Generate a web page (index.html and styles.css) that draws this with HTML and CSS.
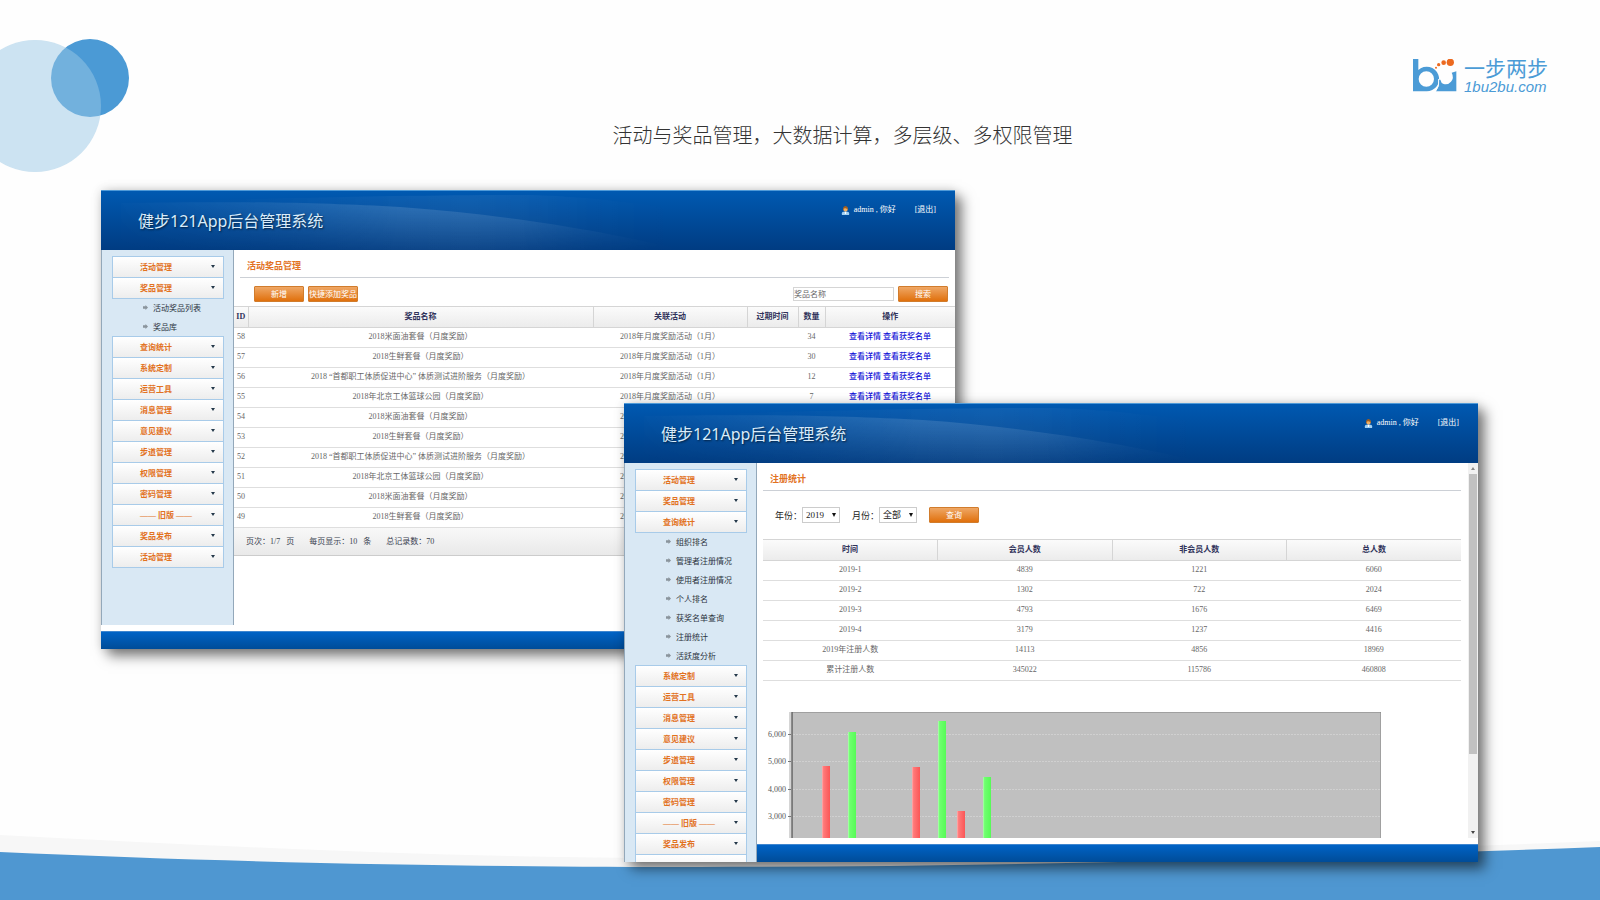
FILE: index.html
```html
<!DOCTYPE html>
<html lang="zh-CN">
<head>
<meta charset="utf-8">
<title>健步121App后台管理系统</title>
<link rel="stylesheet" href="styles.css">
</head>
<body>
<svg class="defs" width="0" height="0" aria-hidden="true">
  <defs>
    <linearGradient id="beam" x1="0" y1="0" x2="0" y2="1">
      <stop offset="0" stop-color="#fff" stop-opacity=".14"/>
      <stop offset="1" stop-color="#fff" stop-opacity="0"/>
    </linearGradient>
    <linearGradient id="haze" x1="0" y1="0" x2="1" y2="0">
      <stop offset="0" stop-color="#fff" stop-opacity="0"/>
      <stop offset=".6" stop-color="#fff" stop-opacity=".06"/>
      <stop offset="1" stop-color="#fff" stop-opacity="0"/>
    </linearGradient>
    <linearGradient id="fade" x1="0" y1="0" x2="1" y2="0">
      <stop offset="0" stop-color="#000"/>
      <stop offset=".5" stop-color="#fff"/>
      <stop offset=".7" stop-color="#fff"/>
      <stop offset="1" stop-color="#000"/>
    </linearGradient>
    <mask id="edges" maskUnits="userSpaceOnUse" x="0" y="0" width="600" height="59">
      <rect width="600" height="59" fill="url(#fade)"/>
    </mask>
    <linearGradient id="red" x1="0" y1="0" x2="1" y2="0">
      <stop offset="0" stop-color="#ffb0b0"/><stop offset=".2" stop-color="#ff7a7a"/><stop offset="1" stop-color="#fb5656"/>
    </linearGradient>
    <linearGradient id="green" x1="0" y1="0" x2="1" y2="0">
      <stop offset="0" stop-color="#b4ffb4"/><stop offset=".2" stop-color="#70ff70"/><stop offset="1" stop-color="#56fb56"/>
    </linearGradient>
    <symbol id="swoosh" viewBox="0 0 600 59">
      <g mask="url(#edges)">
        <path d="M20 12C200 6 330 4 432 4C500 6 560 16 600 22V59H20Z" fill="url(#haze)"/>
        <path d="M20 12C159 10 220 12 299 16C400 23 506 40 580 59H20Z" fill="url(#beam)"/>
      </g>
    </symbol>
    <symbol id="user" viewBox="0 0 10 10">
      <path d="M1 10V8Q1 6.500 3 6.500H7Q9 6.500 9 8V10Z" fill="#9fd0f5"/>
      <path d="M4 6H6L5.500 9H4.500Z" fill="#fff"/>
      <circle cx="5" cy="3.500" r="2.500" fill="#f0b066"/>
      <path d="M2.300 5V3Q2.500 0 5 0T7.700 3V5L6.700 3Q5 3 4.500 2.200Q3.500 3 3.300 3.200Z" fill="#a35f1e"/>
    </symbol>
  </defs>
</svg>

<main class="slide">
  <svg class="bubbles" width="130" height="180" viewBox="0 0 130 180" aria-hidden="true">
    <circle cx="90" cy="78" r="39" fill="#4b9ad5"/>
    <circle cx="35" cy="106" r="66" fill="#99c7e5" fill-opacity=".5"/>
  </svg>
  <svg class="wave" viewBox="0 0 1600 70" preserveAspectRatio="none" aria-hidden="true">
    <path d="M0 5C250 18 450 27 650 28C1000 28 1300 24 1600 11V70H0Z" fill="#f7f7f7"/>
    <path d="M0 22C267 34 500 37 700 37C1000 37 1300 28 1600 17V70H0Z" fill="#4f97d1"/>
  </svg>

  <header class="top">
    <div class="brand">
      <svg width="44" height="33" viewBox="0 0 132 99" aria-hidden="true">
        <path d="M0 0H16V33A37 37 0 1 1 40 97H0ZM40 37A23 23 0 1 0 40 83A23 23 0 1 0 40 37Z" fill="#4b9bd6" fill-rule="evenodd"/>
        <path d="M76 62Q79 82 68 97H130V37L116 41Q124 56 114 68Q104 79 92 75Q84 72 82 62Z" fill="#4b9bd6"/>
        <path d="M77 60Q81 82 67 98" fill="none" stroke="#fff" stroke-width="3"/>
        <g fill="#ec6a20"><circle cx="112" cy="10" r="11"/><circle cx="92" cy="11" r="7"/><circle cx="77" cy="17" r="5"/><circle cx="69" cy="26" r="3"/></g>
      </svg>
      <div class="brand-text"><span class="brand-cn">一步两步</span><span class="brand-url">1bu2bu.com</span></div>
    </div>
    <h1 class="headline">活动与奖品管理，大数据计算，多层级、多权限管理</h1>
  </header>

  <div class="desk">
    <section class="win win-back">
      <header class="win-head">
        <svg class="swoosh" width="600" height="59" aria-hidden="true"><use href="#swoosh"/></svg>
        <h2 class="win-title">健步121App后台管理系统</h2>
        <div class="account"><svg width="9" height="9" aria-hidden="true"><use href="#user"/></svg><span>admin , 你好</span><a class="logout" href="#">[退出]</a></div>
      </header>
      <div class="win-body">
        <nav class="side">
          <button class="item">活动管理</button>
          <button class="item">奖品管理</button>
          <div class="sub"><a href="#">活动奖品列表</a><a href="#">奖品库</a></div>
          <button class="item">查询统计</button>
          <button class="item">系统定制</button>
          <button class="item">运营工具</button>
          <button class="item">消息管理</button>
          <button class="item">意见建议</button>
          <button class="item">步道管理</button>
          <button class="item">权限管理</button>
          <button class="item">密码管理</button>
          <button class="item">—— 旧版 ——</button>
          <button class="item">奖品发布</button>
          <button class="item">活动管理</button>
        </nav>
        <div class="pane">
          <h3 class="pane-title">活动奖品管理</h3>
          <form class="tools">
            <button class="btn" type="button">新增</button>
            <button class="btn" type="button">快捷添加奖品</button>
            <input class="search" type="text" placeholder="奖品名称" aria-label="奖品名称">
            <button class="btn" type="button">搜索</button>
          </form>
          <table class="grid prizes">
            <colgroup><col class="c-id"><col><col class="c-act"><col class="c-exp"><col class="c-num"><col class="c-op"></colgroup>
            <thead><tr><th>ID</th><th>奖品名称</th><th>关联活动</th><th>过期时间</th><th>数量</th><th>操作</th></tr></thead>
            <tbody>
              <tr><td>58</td><td>2018米面油套餐（月度奖励）</td><td>2018年月度奖励活动（1月）</td><td></td><td>34</td><td><a href="#">查看详情</a> <a href="#">查看获奖名单</a></td></tr>
              <tr><td>57</td><td>2018生鲜套餐（月度奖励）</td><td>2018年月度奖励活动（1月）</td><td></td><td>30</td><td><a href="#">查看详情</a> <a href="#">查看获奖名单</a></td></tr>
              <tr><td>56</td><td>2018 “首都职工体质促进中心” 体质测试进阶服务（月度奖励）</td><td>2018年月度奖励活动（1月）</td><td></td><td>12</td><td><a href="#">查看详情</a> <a href="#">查看获奖名单</a></td></tr>
              <tr><td>55</td><td>2018年北京工体篮球公园（月度奖励）</td><td>2018年月度奖励活动（1月）</td><td></td><td>7</td><td><a href="#">查看详情</a> <a href="#">查看获奖名单</a></td></tr>
              <tr><td>54</td><td>2018米面油套餐（月度奖励）</td><td>2018年月度奖励活动（1月）</td><td></td><td></td><td></td></tr>
              <tr><td>53</td><td>2018生鲜套餐（月度奖励）</td><td>2018年月度奖励活动（1月）</td><td></td><td></td><td></td></tr>
              <tr><td>52</td><td>2018 “首都职工体质促进中心” 体质测试进阶服务（月度奖励）</td><td>2018年月度奖励活动（1月）</td><td></td><td></td><td></td></tr>
              <tr><td>51</td><td>2018年北京工体篮球公园（月度奖励）</td><td>2018年月度奖励活动（1月）</td><td></td><td></td><td></td></tr>
              <tr><td>50</td><td>2018米面油套餐（月度奖励）</td><td>2018年月度奖励活动（1月）</td><td></td><td></td><td></td></tr>
              <tr><td>49</td><td>2018生鲜套餐（月度奖励）</td><td>2018年月度奖励活动（1月）</td><td></td><td></td><td></td></tr>
            </tbody>
          </table>
          <div class="pager"><span>页次：1/7 &nbsp; 页</span><span>每页显示：10 &nbsp; 条</span><span>总记录数：70</span></div>
        </div>
      </div>
      <footer class="win-foot"></footer>
    </section>

    <section class="win win-front">
      <header class="win-head">
        <svg class="swoosh" width="600" height="59" aria-hidden="true"><use href="#swoosh"/></svg>
        <h2 class="win-title">健步121App后台管理系统</h2>
        <div class="account"><svg width="9" height="9" aria-hidden="true"><use href="#user"/></svg><span>admin , 你好</span><a class="logout" href="#">[退出]</a></div>
      </header>
      <div class="win-body">
        <nav class="side">
          <button class="item">活动管理</button>
          <button class="item">奖品管理</button>
          <button class="item">查询统计</button>
          <div class="sub"><a href="#">组织排名</a><a href="#">管理者注册情况</a><a href="#">使用者注册情况</a><a href="#">个人排名</a><a href="#">获奖名单查询</a><a href="#">注册统计</a><a href="#">活跃度分析</a></div>
          <button class="item">系统定制</button>
          <button class="item">运营工具</button>
          <button class="item">消息管理</button>
          <button class="item">意见建议</button>
          <button class="item">步道管理</button>
          <button class="item">权限管理</button>
          <button class="item">密码管理</button>
          <button class="item">—— 旧版 ——</button>
          <button class="item">奖品发布</button>
          <button class="item" aria-label="活动管理"></button>
        </nav>
        <div class="column">
          <div class="scroll">
            <div class="pane">
              <h3 class="pane-title">注册统计</h3>
              <form class="filters">
                <label for="year">年份：</label>
                <span class="pick"><select id="year"><option>2019</option></select></span>
                <label for="month">月份：</label>
                <span class="pick"><select id="month"><option>全部</option></select></span>
                <button class="btn" type="button">查询</button>
              </form>
              <table class="grid stats">
                <thead><tr><th>时间</th><th>会员人数</th><th>非会员人数</th><th>总人数</th></tr></thead>
                <tbody>
                  <tr><td>2019-1</td><td>4839</td><td>1221</td><td>6060</td></tr>
                  <tr><td>2019-2</td><td>1302</td><td>722</td><td>2024</td></tr>
                  <tr><td>2019-3</td><td>4793</td><td>1676</td><td>6469</td></tr>
                  <tr><td>2019-4</td><td>3179</td><td>1237</td><td>4416</td></tr>
                  <tr><td>2019年注册人数</td><td>14113</td><td>4856</td><td>18969</td></tr>
                  <tr><td>累计注册人数</td><td>345022</td><td>115786</td><td>460808</td></tr>
                </tbody>
              </table>
              <svg class="chart" width="618" height="126" viewBox="0 0 618 126" role="img" aria-label="注册统计图">
                <rect x="29" y="0" width="589" height="140" fill="#c0c0c0" stroke="#808080"/>
                <path d="M27 0V126" stroke="#aaa"/>
                <path d="M29 0V126" stroke="#555"/>
                <path d="M30 22H617M30 49H617M30 77H617M30 104H617" transform="translate(0 .5)" stroke="#d0d0d0" stroke-dasharray="2 1"/>
                <path d="M25 22H28M25 49H28M25 77H28M25 104H28" transform="translate(0 .5)" stroke="#777"/>
                <g class="ticks" text-anchor="end"><text x="23" y="25">6,000</text><text x="23" y="52">5,000</text><text x="23" y="80">4,000</text><text x="23" y="107">3,000</text></g>
                <g fill="url(#red)"><rect x="59" y="54" width="8" height="72"/><rect x="149" y="55" width="8" height="71"/><rect x="194" y="99" width="8" height="27"/></g>
                <g fill="url(#green)"><rect x="85" y="20" width="8" height="106"/><rect x="175" y="9" width="8" height="117"/><rect x="220" y="65" width="8" height="61"/></g>
              </svg>
            </div>
            <div class="bar" aria-hidden="true"><i class="up"></i><i class="thumb"></i><i class="down"></i></div>
          </div>
          <footer class="win-foot"></footer>
        </div>
      </div>
    </section>
  </div>
</main>
</body>
</html>
```

FILE: styles.css
```css
* { box-sizing: border-box; }

body {
  margin: 0;
  background: #fefefe;
  color: #333;
  font-family: "Liberation Serif", "Noto Sans CJK SC", serif;
  font-size: 8px;
}

h1, h2, h3 { margin: 0; font-weight: 400; }
button, input, select { font: inherit; color: inherit; }
a { text-decoration: none; }

.defs { position: absolute; }

.slide {
  position: relative;
  min-height: 100vh;
  overflow: hidden;
}

.bubbles { position: absolute; left: 0; top: 0; }
.wave { position: absolute; left: 0; bottom: 0; width: 100%; height: 70px; }

/* Top of the slide */
.top { position: relative; padding-top: 55px; }

.brand {
  display: flex;
  justify-content: flex-end;
  gap: 7px;
  height: 38px;
  padding-right: 50px;
  color: #4b9bd6;
}
.brand svg { margin-top: 4px; }
.brand-text { display: flex; flex-direction: column; width: 86px; }
.brand-cn { font: 400 21px/25px "Noto Sans CJK SC", sans-serif; }
.brand-url { font: italic 15px/13px "Liberation Sans", sans-serif; }

.headline {
  margin-top: 27px;
  padding-left: 85px;
  text-align: center;
  font: 300 20px/30px "Noto Sans CJK SC", sans-serif;
}

/* The two overlapping windows */
.desk {
  position: relative;
  display: grid;
  grid-template-columns: 101fr 523fr 331fr 523fr 122fr;
  align-items: start;
  margin-top: 40px;
  padding-bottom: 38px;
}

.win {
  grid-row: 1;
  min-width: 0;
  background: #fff;
  box-shadow: 7px 7px 12px rgba(0, 0, 0, .5), 0 0 10px rgba(0, 0, 0, .15);
}
.win-back { grid-column: 2 / 4; }
.win-front { grid-column: 3 / 5; margin-top: 213px; }

.win-head {
  position: relative;
  display: flex;
  justify-content: space-between;
  align-items: flex-start;
  height: 60px;
  padding: 14px 19px 0 37px;
  border-top: 1px solid #4f9ad8;
  background: linear-gradient(#0059b1, #003c82);
  color: #fff;
}
.swoosh { position: absolute; left: 0; top: 0; }

.win-title {
  position: relative;
  padding-top: 4px;
  color: #d9ecfb;
  font: 400 16px/24px "Noto Sans", "Noto Sans CJK SC", sans-serif;
  text-shadow: 1px 1px 2px rgba(0, 0, 0, .6);
}

.account {
  position: relative;
  display: flex;
  align-items: center;
  gap: 4px;
  line-height: 10px;
}
.logout { margin-left: 15px; color: #fff; }

.win-body {
  display: grid;
  grid-template-columns: 133px minmax(0, 1fr);
  min-height: 375px;
}

/* Sidebar */
.side {
  contain: size;
  overflow: hidden;
  display: flex;
  flex-direction: column;
  padding: 6px 9px 0 10px;
  border: solid #93a8ba;
  border-width: 0 1px;
  background: #d9e8f4;
}

.item {
  flex: none;
  display: flex;
  justify-content: space-between;
  align-items: center;
  height: 22px;
  margin: 0 0 -1px;
  padding: 0 8px 1px 27px;
  border: 1px solid #a8cbe9;
  border-radius: 0;
  background: linear-gradient(#fff, #ededed);
  color: #e2721f;
  font-weight: 700;
}
.item::after {
  content: "";
  border: solid transparent;
  border-width: 3px 2px 0;
  border-top-color: #24384a;
}

.sub { flex: none; display: flex; flex-direction: column; padding-left: 31px; }
.sub a {
  display: flex;
  align-items: center;
  gap: 5px;
  height: 19px;
  color: #2c3440;
}
.sub a::before {
  content: "";
  width: 5px;
  height: 5px;
  background: #8a949c;
  clip-path: polygon(0 25%, 50% 25%, 50% 0, 100% 50%, 50% 100%, 50% 75%, 0 75%);
}

/* Content pane */
.pane { min-width: 0; }

.pane-title {
  margin: 0 6px;
  padding: 10px 0 5px 7px;
  border-bottom: 1px solid #ccd0d6;
  color: #e2721f;
  font-size: 9px;
  font-weight: 700;
  line-height: 12px;
}

.btn {
  width: 50px;
  height: 16px;
  padding: 0 0 1px;
  border: 1px solid #d17c2c;
  border-radius: 1px;
  background: linear-gradient(#efa765, #e0700c);
  color: #fff;
  white-space: nowrap;
}

.tools {
  display: flex;
  align-items: center;
  gap: 4px;
  padding: 8px 7px 4px 20px;
}
.search {
  width: 101px;
  height: 14px;
  margin-left: auto;
  padding: 0;
  border: 1px solid #d5d5d5;
}
.search::placeholder { color: #666; }

.grid {
  width: 100%;
  table-layout: fixed;
  border-collapse: collapse;
  color: #666;
  text-align: center;
}
.grid th, .grid td { padding: 0 0 1px; line-height: 10px; white-space: nowrap; }
.grid thead { background: linear-gradient(#fbfbfb, #ebebeb); }
.grid th {
  height: 21px;
  border: solid #d5d5d5;
  border-width: 1px 0 1px 1px;
  color: #30325a;
  font-weight: 700;
}
.grid th:first-child { border-left-width: 0; }
.grid td { height: 20px; border-bottom: 1px solid #dedede; }

.c-id { width: 14px; }
.c-act { width: 154px; }
.c-exp { width: 51px; }
.c-num { width: 27px; }
.c-op { width: 130px; }
.prizes td:first-child { padding-left: 3px; text-align: left; }
.prizes a { color: #1616d8; font-weight: 500; }

.pager {
  display: flex;
  gap: 15px;
  padding: 8px 12px 8px;
  border-bottom: 1px solid #ccc;
  background: linear-gradient(#f8f8f8, #e9e9e9);
  color: #3a4250;
  line-height: 11px;
}

.win-foot {
  height: 18px;
  margin-top: 6px;
  border-top: 1px solid #3f86cf;
  background: linear-gradient(#0063c6, #004c98);
}

/* Statistics window */
.column { display: flex; flex-direction: column; min-width: 0; }
.scroll { flex: 1; display: grid; grid-template-columns: minmax(0, 1fr) 10px; }
.scroll .pane { padding: 0 7px 0 6px; }
.scroll .pane-title { margin: 0; }

.filters {
  display: flex;
  align-items: center;
  padding: 16px 0 16px 12px;
  color: #222;
  font-size: 9px;
}
.filters .btn { font-size: 8px; }
.pick { position: relative; margin-right: 12px; }
.pick::after {
  content: "";
  position: absolute;
  right: 4px;
  top: 6px;
  border: solid transparent;
  border-width: 4px 2px 0;
  border-top-color: #111;
}
.pick select {
  display: block;
  appearance: none;
  width: 38px;
  height: 16px;
  padding: 0 3px;
  border: 1px solid #ccc;
  border-radius: 0;
  background: #fff;
}

.chart { display: block; max-width: 100%; margin-top: 31px; }
.ticks { font: 8px "Liberation Serif", serif; fill: #555; }

.bar {
  display: flex;
  flex-direction: column;
  align-items: center;
  padding: 4px 0;
  background: #f1f1f1;
}
.up, .down { border: solid transparent; }
.up { border-width: 0 2px 3px; border-bottom-color: #888; }
.thumb { width: 8px; height: 280px; margin-top: 4px; background: #c1c1c1; }
.down { margin-top: auto; border-width: 3px 2px 0; border-top-color: #444; }
```
